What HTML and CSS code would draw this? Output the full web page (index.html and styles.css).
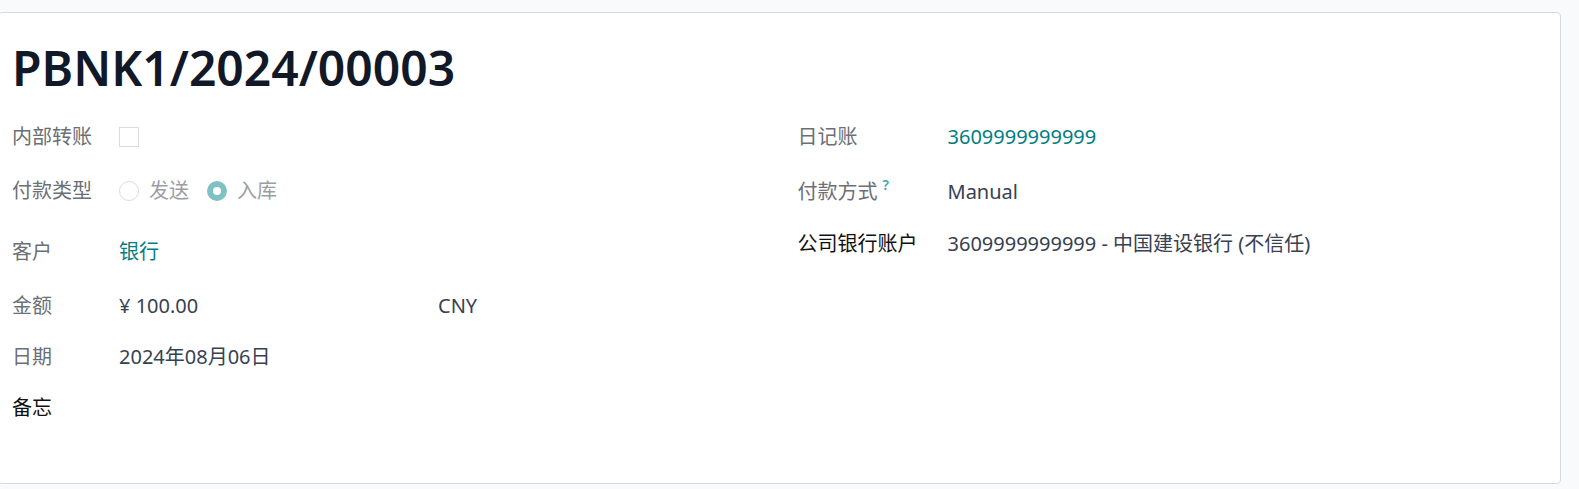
FILE: index.html
```html
<!DOCTYPE html>
<html lang="zh-CN">
<head>
  <meta charset="UTF-8" />
  <meta name="viewport" content="width=device-width, initial-scale=1.0"/>
  <title>PBNK1/2024/00003</title>
  <link rel="stylesheet" href="styles.css">
</head>
<body>
  <div class="sheet">
    <h1 class="title">PBNK1/2024/00003</h1>

    <div class="groups">
      <div class="group group-left">
        <div class="label">内部转账</div>
        <div class="value"><span class="checkbox"></span></div>

        <div class="label">付款类型</div>
        <div class="value radios">
          <span class="radio"></span><span class="radio-text">发送</span>
          <span class="radio checked"></span><span class="radio-text">入库</span>
        </div>

        <div class="label">客户</div>
        <div class="value link">银行</div>

        <div class="label">金额</div>
        <div class="value amount">
          <span class="amount-num">¥ 100.00</span>
          <span class="currency">CNY</span>
        </div>

        <div class="label">日期</div>
        <div class="value">2024年08月06日</div>

        <div class="label strong">备忘</div>
        <div class="value"></div>
      </div>

      <div class="group group-right">
        <div class="label">日记账</div>
        <div class="value link">3609999999999</div>

        <div class="label">付款方式<sup class="help">?</sup></div>
        <div class="value">Manual</div>

        <div class="label strong">公司银行账户</div>
        <div class="value">3609999999999 - 中国建设银行 (不信任)</div>
      </div>
    </div>
  </div>
</body>
</html>
```

FILE: styles.css
```css
body {
  margin: 0;
  padding: 12px 18px 0 0;
  background: #f9fafb;
  font-family: "Noto Sans", "Noto Sans CJK SC", sans-serif;
  font-size: 20px;
  color: #374151;
}

.sheet {
  margin-left: -2px;
  height: 445px;
  background: #fff;
  border: 1px solid #d8dadd;
  border-radius: 4px;
  padding: 25px 11px 0 13px;
}

.title {
  margin: 0;
  font-size: 48px;
  line-height: 60px;
  font-weight: 600;
  color: #111827;
}

.groups {
  display: grid;
  grid-template-columns: 1fr 1fr;
  column-gap: 34px;
  margin-top: 25px;
}

.group {
  display: grid;
  align-items: start;
}

.group-left {
  grid-template-columns: 107px 1fr;
  grid-template-rows: 54px 61px 54px 51px 51px auto;
}

.group-right {
  grid-template-columns: 150px 1fr;
  grid-template-rows: 55px 52px auto;
}

.label {
  line-height: 27px;
  color: #6b6f76;
  white-space: nowrap;
}

.label.strong {
  color: #111;
}

.value {
  line-height: 27px;
  display: flex;
  align-items: center;
  min-height: 27px;
}

.link {
  color: #017e84;
}

.help {
  color: #3aa6b9;
  font-size: 14px;
  font-weight: 600;
  vertical-align: top;
  line-height: 14px;
  margin-left: 5px;
}

.checkbox {
  width: 18px;
  height: 18px;
  border: 1px solid #dcdcdc;
}

.radio {
  width: 18px;
  height: 18px;
  border: 1px solid #dcdcdc;
  border-radius: 50%;
  margin-right: 10px;
}

.radio.checked {
  width: 8px;
  height: 8px;
  border: 6px solid #80c1c3;
}

.radio-text {
  color: #9b9ea4;
  margin-right: 18px;
}

.amount-num {
  width: 319px;
}
```
